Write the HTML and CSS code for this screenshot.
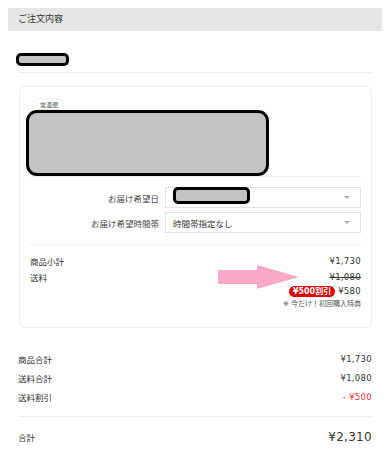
FILE: index.html
```html
<!DOCTYPE html>
<html lang="ja">
<head>
    <meta charset="UTF-8">
    <meta name="viewport" content="width=device-width, initial-scale=1.0">
    <title>ご注文内容</title>
    <link rel="stylesheet" href="styles.css">
</head>
<body>

    <div class="page">
        <div class="head">ご注文内容</div>

        <div class="content">
            <div class="shop">
                <span class="mask mask-shop"></span>
            </div>

            <div class="card">
                <span class="tag">常温便</span>
                <div class="item">
                    <span class="mask mask-item"></span>
                </div>

                <div class="delivery">
                    <div class="field">
                        <span class="field-label">お届け希望日</span>
                        <div class="select">
                            <span class="mask mask-date"></span>
                            <span class="caret"></span>
                        </div>
                    </div>
                    <div class="field">
                        <span class="field-label">お届け希望時間帯</span>
                        <div class="select">
                            <span>時間帯指定なし</span>
                            <span class="caret"></span>
                        </div>
                    </div>
                </div>

                <div class="subtotal">
                    <div class="row">
                        <span>商品小計</span>
                        <span class="num">¥1,730</span>
                    </div>
                    <div class="row">
                        <span>送料</span>
                        <span class="num strike">¥1,080</span>
                    </div>
                    <div class="row row-end">
                        <span class="off">¥500割引</span>
                        <span class="num">¥580</span>
                    </div>
                    <div class="row row-end note">※ 今だけ！初回購入特典</div>
                </div>

                <!-- pink arrow lying over the shipping row -->
                <svg class="arrow" width="81" height="24" viewBox="0 0 81 24">
                    <polygon points="0,5 39,5 39,0 81,12 39,24 39,19 0,19" fill="#f9a8c8"/>
                </svg>
            </div>

            <div class="summary">
                <div class="row">
                    <span>商品合計</span>
                    <span class="num">¥1,730</span>
                </div>
                <div class="row">
                    <span>送料合計</span>
                    <span class="num">¥1,080</span>
                </div>
                <div class="row">
                    <span>送料割引</span>
                    <span class="num minus">- ¥500</span>
                </div>
            </div>

            <div class="total">
                <span>合計</span>
                <span class="num total-price">¥2,310</span>
            </div>
        </div>
    </div>

</body>
</html>
```

FILE: styles.css
```css
body {
    margin: 0;
    padding: 0;
    background-color: #fff;
    color: #333;
    font-family: "DejaVu Sans", "Noto Sans CJK JP", sans-serif;
    font-size: 8.5px;
}

.page {
    margin: 8px 4px 0 8px;
}

.head {
    height: 23px;
    line-height: 23px;
    padding-left: 10px;
    background-color: #e6e6e6;
    font-size: 9px;
}

.content {
    padding: 0 10px;
}

.mask {
    display: block;
    box-sizing: border-box;
    background-color: #c4c4c4;
    border: 3px solid #000;
}

.shop {
    padding: 22px 0 6px;
    border-bottom: 1px solid #eee;
}

.mask-shop {
    width: 53px;
    height: 13px;
    margin-left: -2px;
    border-radius: 5px;
}

.card {
    position: relative;
    margin: 13px 0 0 1px;
    padding: 11px 10px 0;
    border: 1px solid #eee;
    border-radius: 6px;
}

.tag {
    display: inline-block;
    margin-left: 4px;
    padding: 0 5px;
    height: 12px;
    line-height: 12px;
    border: 1px solid #eee;
    border-radius: 6px;
    font-size: 6px;
    color: #555;
    box-sizing: border-box;
}

.item {
    border-bottom: 1px solid #eee;
}

.mask-item {
    width: 243px;
    height: 66px;
    margin-left: -4px;
    border-radius: 11px;
}

.delivery {
    padding: 10px 0 11px;
    border-bottom: 1px solid #eee;
}

.field {
    display: flex;
    align-items: center;
    gap: 6px;
}

.field + .field {
    margin-top: 4px;
}

.field-label {
    width: 129px;
    text-align: right;
    color: #444;
}

.select {
    flex: 1;
    display: flex;
    align-items: center;
    justify-content: space-between;
    height: 21px;
    padding: 0 10px 0 7px;
    border: 1px solid #e2e2e2;
    box-sizing: border-box;
}

.mask-date {
    width: 77px;
    height: 17px;
    margin-top: -4px;
    border-radius: 5px;
}

.caret {
    width: 0;
    height: 0;
    border-left: 3px solid transparent;
    border-right: 3px solid transparent;
    border-top: 3px solid #aaa;
}

.subtotal {
    padding: 8px 0 18px;
}

.row {
    display: flex;
    justify-content: space-between;
    align-items: center;
    height: 16px;
}

.row-end {
    justify-content: flex-end;
    gap: 3px;
}

.subtotal .row-end {
    height: 12px;
}

.note {
    height: 14px;
    font-size: 7px;
    color: #555;
}

.num {
    font-size: 8.5px;
    letter-spacing: 0.3px;
}

.strike {
    text-decoration: line-through;
}

.off {
    display: inline-block;
    padding: 0 4px;
    height: 11px;
    line-height: 11px;
    border-radius: 6px;
    background-color: #e10000;
    color: #fff;
    font-weight: bold;
    font-size: 8px;
}

.arrow {
    position: absolute;
    left: 198px;
    top: 178px;
}

.summary {
    padding: 21px 0 10px;
    border-bottom: 1px solid #eee;
}

.summary .row {
    height: 19px;
}

.minus {
    color: #e33;
}

.total {
    display: flex;
    justify-content: space-between;
    align-items: center;
    height: 40px;
}

.total-price {
    font-size: 12px;
}
```
